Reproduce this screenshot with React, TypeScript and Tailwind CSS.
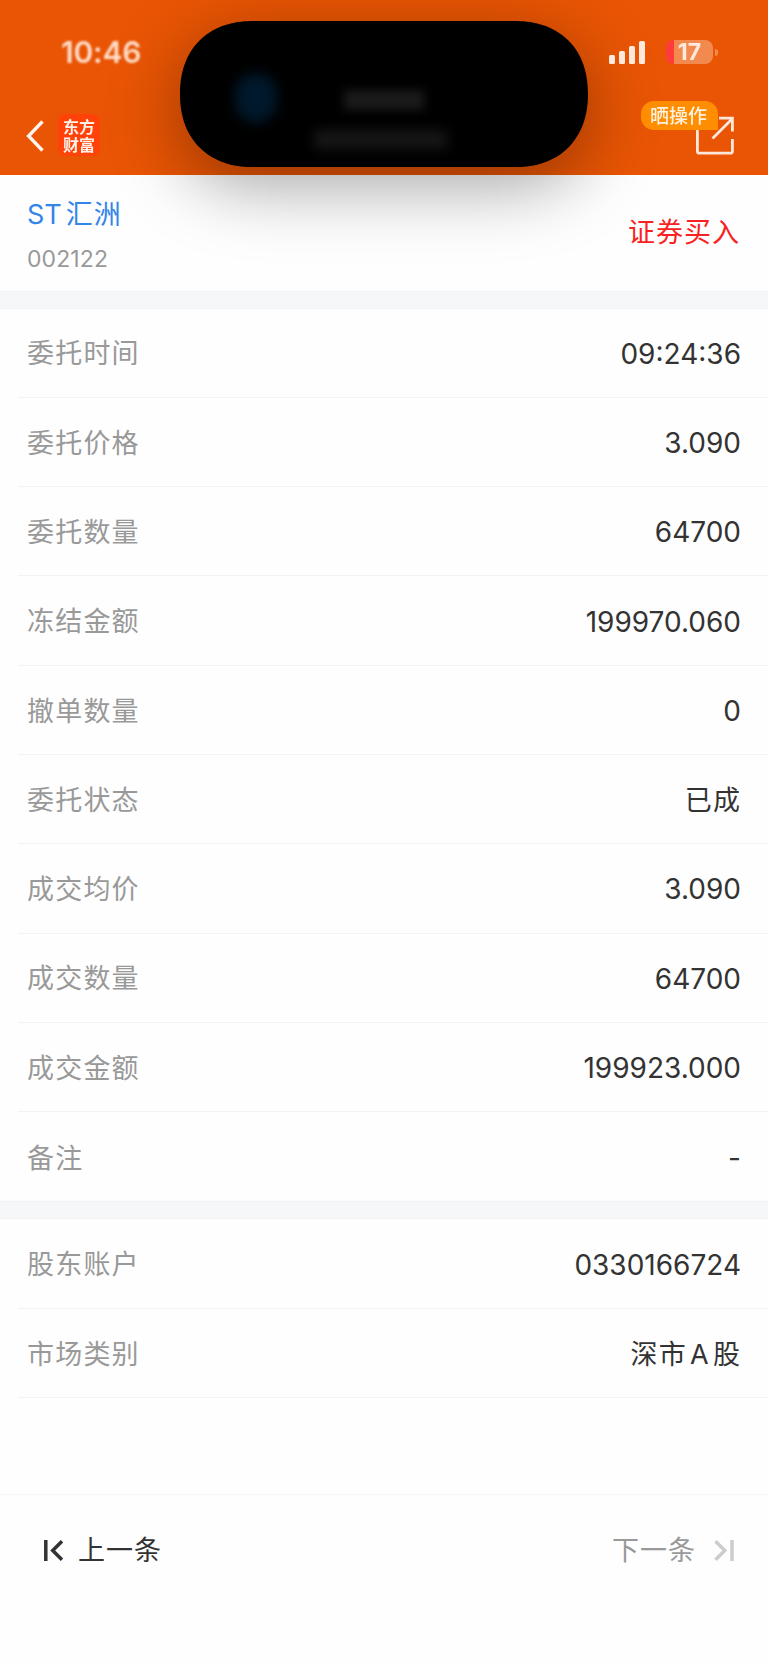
const orderRows = [
  { label: '委托时间', value: '09:24:36' },
  { label: '委托价格', value: '3.090' },
  { label: '委托数量', value: '64700' },
  { label: '冻结金额', value: '199970.060' },
  { label: '撤单数量', value: '0' },
  { label: '委托状态', value: '已成', cjk: true },
  { label: '成交均价', value: '3.090' },
  { label: '成交数量', value: '64700' },
  { label: '成交金额', value: '199923.000' },
  { label: '备注', value: '-' },
]

const signalBars = ['h-[9px]', 'h-[13px]', 'h-[18px]', 'h-[23px]']

function Row({ label, value, cjk, last }: { label: string; value: string; cjk?: boolean; last?: boolean }) {
  return (
    <div className="pl-[18px]">
      <div className={`flex h-[89.3px] items-center justify-between pl-[9px] pr-[27px] ${last ? '' : 'border-b border-[#f3f3f4]'}`}>
        <span className="pt-[4px] text-[27px] tracking-[1.2px] text-[#999]">{label}</span>
        <span className={`text-[#333] ${cjk ? 'pt-[4px] text-[27px] tracking-[1.1px] [word-spacing:-5.5px]' : 'pt-[2px] text-[28px]'}`}>{value}</span>
      </div>
    </div>
  )
}

function Island() {
  return (
    <div className="absolute left-[180px] top-[20.5px] h-[146px] w-[408px] rounded-[73px] bg-black shadow-[0_18px_70px_rgba(0,0,0,0.36)] [corner-shape:superellipse(1.15)]">
      <div className="absolute left-[55px] top-[52px] h-[50px] w-[42px] rounded-full bg-[#00182b] blur-[6px]" />
      <div className="absolute left-[164px] top-[69px] flex blur-[5px]">
        {[0, 1, 2, 3].map(i => <div key={i} className="h-[20px] w-[20px] bg-[#1a1a1a]" />)}
      </div>
      <div className="absolute left-[134px] top-[109px] flex blur-[6px]">
        {[0, 1, 2, 3, 4, 5, 6].map(i => <div key={i} className="h-[19px] w-[19px] bg-[#161617]" />)}
      </div>
    </div>
  )
}

function Header() {
  return (
    <header className="relative z-10 h-[174.5px] bg-[#e95504] text-white">
      <Island />
      <div className="relative flex items-center justify-between pl-[61px] pr-[50px] pt-[35px]">
        <span className="text-[30px] font-semibold leading-[34px] tracking-[-0.2px] text-[#ffdcc8] blur-[0.8px]">10:46</span>
        <div className="flex h-[34px] items-center blur-[0.7px]">
          <div className="flex h-[23px] items-end gap-[4px]">
            {signalBars.map(h => <div key={h} className={`w-[6px] rounded-[1.5px] bg-[#ffe8dc] ${h}`} />)}
          </div>
          <div className="ml-[21px] flex h-[24px] w-[47px] items-center justify-center rounded-[8px] bg-[linear-gradient(90deg,#ff3b3b_8px,#f28a50_8px)] text-[23px] font-bold leading-6 text-[#ffe8dc]">17</div>
          <div className="ml-[2px] h-[7px] w-[3px] rounded-r-full bg-[#f28a50]" />
        </div>
      </div>
      <div className="relative flex items-start justify-between pl-[26px] pr-[34px] pt-[30px]">
        <div className="flex items-center pt-[15px]">
          <svg className="h-[32px] w-[18px] mt-[1px] blur-[0.3px]" viewBox="0 0 18 32" fill="none" stroke="#fff3ec" strokeWidth="3.4">
            <path d="M16.5 1.5 2.6 16l13.9 14.5" />
          </svg>
          <div className="ml-[14px] flex h-[42px] w-[42px] flex-col items-center justify-center rounded-[8px] bg-[#ff4208] font-['Noto_Sans_CJK_SC',serif] text-[16px] font-bold leading-[18px] text-[#fff0e8] blur-[0.5px]">
            <span>东方</span>
            <span>财富</span>
          </div>
        </div>
        <div className="relative mt-[17px] h-[39px] w-[39px]">
          <svg className="h-[39px] w-[39px] blur-[0.4px]" viewBox="0 0 39 39" fill="none" stroke="#ffe6da" strokeWidth="2.8">
            <path d="M2.4 12v23.2a2 2 0 0 0 2 2h31a2 2 0 0 0 2-2V23M24 2.2h13.4v13.3M37 3 17.5 22.5" />
          </svg>
          <span className="absolute left-[-54px] top-[-15px] flex h-[29px] w-[77px] items-center justify-center whitespace-nowrap rounded-[13px] rounded-br-none bg-[#ff8d00] pr-[2px] pt-[1px] text-[19px] font-medium leading-[27px] text-[#fff1df] blur-[0.4px]">晒操作</span>
        </div>
      </div>
    </header>
  )
}

export default function App() {
  return (
    <div className="flex h-[1665px] w-[768px] flex-col overflow-hidden bg-[#fefefe] font-['Inter','Noto_Sans_CJK_SC',sans-serif]">
      <Header />

      <section className="flex h-[116.5px] items-start justify-between pl-[27px] pr-[28px]">
        <div className="pt-[20px]">
          <h1 className="flex gap-[5px] text-[27px] leading-[40px] text-[#3485ea]">
            <span>ST</span>
            <span className="-ml-px tracking-[1px]">汇洲</span>
          </h1>
          <p className="mt-[8px] text-[23px] leading-[32px] tracking-[0.1px] text-[#999]">002122</p>
        </div>
        <span className="pt-[38px] text-[27px] leading-[40px] tracking-[1px] text-[#f82222]">证券买入</span>
      </section>

      <div className="h-[17.5px] shrink-0 border-y border-[#f0f1f3] bg-[#f6f7f9]" />
      <section>
        {orderRows.map((r, i) => (
          <Row key={r.label} {...r} last={i === orderRows.length - 1} />
        ))}
      </section>

      <div className="h-[18px] shrink-0 border-y border-[#f0f1f3] bg-[#f6f7f9]" />
      <section>
        <Row label="股东账户" value="0330166724" />
        <Row label="市场类别" value="深市 A 股" cjk />
      </section>

      <footer className="mt-auto flex h-[171px] items-start justify-between border-t border-[#f5f5f6] pl-[43px] pr-[34px] pt-[34px] text-[27px] leading-[40px] tracking-[1px]">
        <button className="flex items-center text-[#333]">
          <svg className="h-[21px] w-[20px]" viewBox="0 0 20 21" fill="none" stroke="#333" strokeWidth="3.5">
            <path d="M2.8 0v21M19 1.2 9.7 10.5l9.3 9.3" />
          </svg>
          <span className="ml-[15px] pt-[2px]">上一条</span>
        </button>
        <button className="flex items-center text-[#999]">
          <span className="pt-[2px]">下一条</span>
          <svg className="ml-[18px] h-[21px] w-[20px]" viewBox="0 0 20 21" fill="none" stroke="#ccc" strokeWidth="3.5">
            <path d="M18 0v21M1.5 1.2 10.8 10.5l-9.3 9.3" />
          </svg>
        </button>
      </footer>
    </div>
  )
}
